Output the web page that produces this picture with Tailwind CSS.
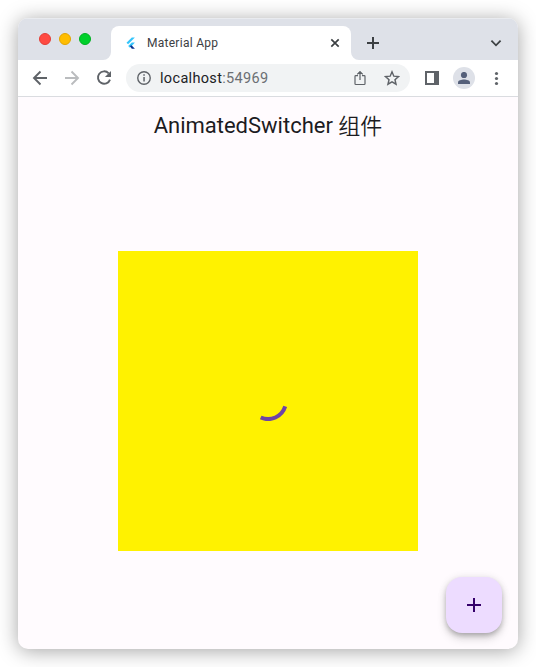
<!DOCTYPE html>
<html lang="zh">
<head>
<meta charset="utf-8">
<title>Material App</title>
<script src="https://cdn.jsdelivr.net/npm/@tailwindcss/browser@4"></script>
</head>
<body class="bg-white w-[536px] h-[667px] overflow-hidden p-[18px]">
<div class="w-[500px] h-[631px] rounded-[10px] overflow-hidden flex flex-col bg-[#fffbfe] shadow-[0_2px_20px_rgba(0,0,0,0.36)]">
  <header class="h-[42px] shrink-0 bg-[#dee1e8] border-t border-[#e9ebef] flex items-end">
    <div class="w-[85px] h-[41px] pl-[21px] pb-[2px] flex gap-2 items-center">
      <span class="size-3 rounded-full bg-[#ff4a42] border border-[#e33e37]"></span>
      <span class="size-3 rounded-full bg-[#ffbd00] border border-[#e2a400]"></span>
      <span class="size-3 rounded-full bg-[#00d02b] border border-[#00b022]"></span>
    </div>
    <svg class="size-2 shrink-0" viewBox="0 0 8 8"><path d="M8 0v8H0A8 8 0 0 0 8 0Z" fill="#fff"/></svg>
    <div class="w-[240px] h-[34px] shrink-0 rounded-t-lg bg-white flex items-center pl-[14px] pr-[10px]">
      <svg class="size-3 shrink-0" viewBox="0 0 12 12"><path d="M6.800 .5H9.900L3.100 7.300 1.500 5.700Z" fill="#35c5fb"/><path d="M6.800 5.500H9.900L7.400 8.200 4.900 10.700 3.200 9.100Z" fill="#35c5fb"/><path d="M4.900 9.100 6.500 8.300 9.900 11.700H6.800Z" fill="#08308e"/></svg>
      <span class="ml-[10px] grow text-[12px] leading-4 text-[#3c4043] font-[Roboto,sans-serif] tracking-[0.27px]">Material App</span>
      <svg class="size-3" viewBox="0 0 12 12" fill="none" stroke="#3c4043" stroke-width="1.7"><path d="m2.300 2.300 7.400 7.400m0-7.400L2.300 9.700"/></svg>
    </div>
    <svg class="size-2 shrink-0" viewBox="0 0 8 8"><path d="M0 0v8h8A8 8 0 0 1 0 0Z" fill="#fff"/></svg>
    <div class="grow h-[34px] flex items-center justify-between pl-2 pr-4">
      <svg class="size-3" viewBox="0 0 12 12" fill="none" stroke="#3c4043" stroke-width="2"><path d="M6 0v12M0 6h12"/></svg>
      <svg class="size-3" viewBox="0 0 12 12" fill="none" stroke="#3c4043" stroke-width="1.8"><path d="m1.400 3.700 4.600 4.600 4.600-4.600"/></svg>
    </div>
  </header>
  <nav class="h-[37px] shrink-0 bg-white border-b border-[#dadce0] flex items-center pl-[14px]">
    <svg class="size-4 mr-4 shrink-0" viewBox="0 0 16 16" fill="none" stroke="#5f6368" stroke-width="1.9"><path d="M15 8H2.500M8.500 1.500 2 8l6.500 6.500"/></svg>
    <svg class="size-4 mr-4 shrink-0" viewBox="0 0 16 16" fill="none" stroke="#babcbe" stroke-width="1.9"><path d="M1 8h12.500M7.500 1.500 14 8l-6.500 6.500"/></svg>
    <svg class="size-4 mr-[14px] shrink-0" viewBox="0 0 16 16"><path d="M12.700 3.300A6.200 6.200 0 1 0 14 9.600" fill="none" stroke="#5f6368" stroke-width="1.900"/><path d="M15 .9V7H8.900Z" fill="#5f6368"/></svg>
    <div class="w-[284px] h-7 shrink-0 rounded-full bg-[#f1f3f4] flex items-center pl-[11px] pr-[10px]">
      <svg class="size-[14px] shrink-0" viewBox="0 0 14 14"><circle cx="7" cy="7" r="6.250" fill="none" stroke="#5f6368" stroke-width="1.400"/><path d="M6.300 3.300h1.500v1.500H6.300ZM6.300 6h1.500v4.600H6.300Z" fill="#5f6368"/></svg>
      <span class="ml-[9px] pt-[2px] grow text-[14.500px] leading-5 font-[Roboto,sans-serif] text-[#202124] tracking-[0.33px]">localhost<span class="text-[#6b6f73]">:54969</span></span>
      <svg class="w-3 h-4 mr-[18px] shrink-0" viewBox="0 0 12 16" fill="none" stroke="#5f6368" stroke-width="1.200"><path d="M4 5.600H1.800Q1 5.600 1 6.400V13.700q0 .8.800.8h8.400q.8 0 .8-.8V6.400q0-.8-.8-.8H8M6 10V2M3.200 4.400 6 1.600l2.800 2.800"/></svg>
      <svg class="size-4 shrink-0" viewBox="0 0 14 14" fill="none" stroke="#5f6368" stroke-width="1.250"><path d="m7 1.600 1.600 3.800 4.100.35-3.100 2.700.95 4L7 10.300l-3.550 2.150.95-4-3.100-2.700 4.100-.35Z"/></svg>
    </div>
    <svg class="size-[14px] ml-[15px] shrink-0" viewBox="0 0 14 14"><path fill="#5f6368" fill-rule="evenodd" d="M0 0h14v14H0ZM2 2v10h7V2Z"/></svg>
    <span class="size-[22px] ml-[14px] shrink-0 rounded-full bg-[#dee1e8] flex items-center justify-center"><svg class="size-3" viewBox="0 0 12 12" fill="#55607a"><circle cx="6" cy="3" r="3.100"/><path d="M0 12v-1.600C0 8.400 3.500 7.500 6 7.500s6 .9 6 2.900V12Z"/></svg></span>
    <svg class="size-4 ml-[14px] shrink-0" viewBox="0 0 16 16" fill="#5f6368"><circle cx="7.500" cy="3.500" r="1.600"/><circle cx="7.500" cy="8.500" r="1.600"/><circle cx="7.500" cy="13.500" r="1.600"/></svg>
  </nav>
  <main class="grow relative flex flex-col items-center">
    <h1 class="h-[56px] mt-[1px] shrink-0 leading-[56px] text-[22px] text-[#1c1b1f] whitespace-nowrap font-[Roboto,'Noto_Sans_CJK_SC',sans-serif]">AnimatedSwitcher <span class="relative top-px font-[350]">组件</span></h1>
    <div class="mt-[97px] size-[300px] bg-[#fff200] flex items-center justify-center">
      <svg class="size-10" viewBox="0 0 40 40" fill="none" stroke="#6f43a6" stroke-width="4"><path d="M37.200 25.400A18 18 0 0 1 12.700 36.500"/></svg>
    </div>
    <button class="absolute right-4 bottom-4 size-14 rounded-2xl bg-[#eddcff] flex items-center justify-center shadow-[0_3px_5px_-1px_rgba(0,0,0,0.2),0_6px_10px_rgba(0,0,0,0.13),0_1px_8px_rgba(0,0,0,0.12)]">
      <svg class="size-[14px]" viewBox="0 0 14 14"><path d="M6 0h2v6h6v2H8v6H6V8H0V6h6Z" fill="#35006b"/></svg>
    </button>
  </main>
</div>
</body>
</html>
